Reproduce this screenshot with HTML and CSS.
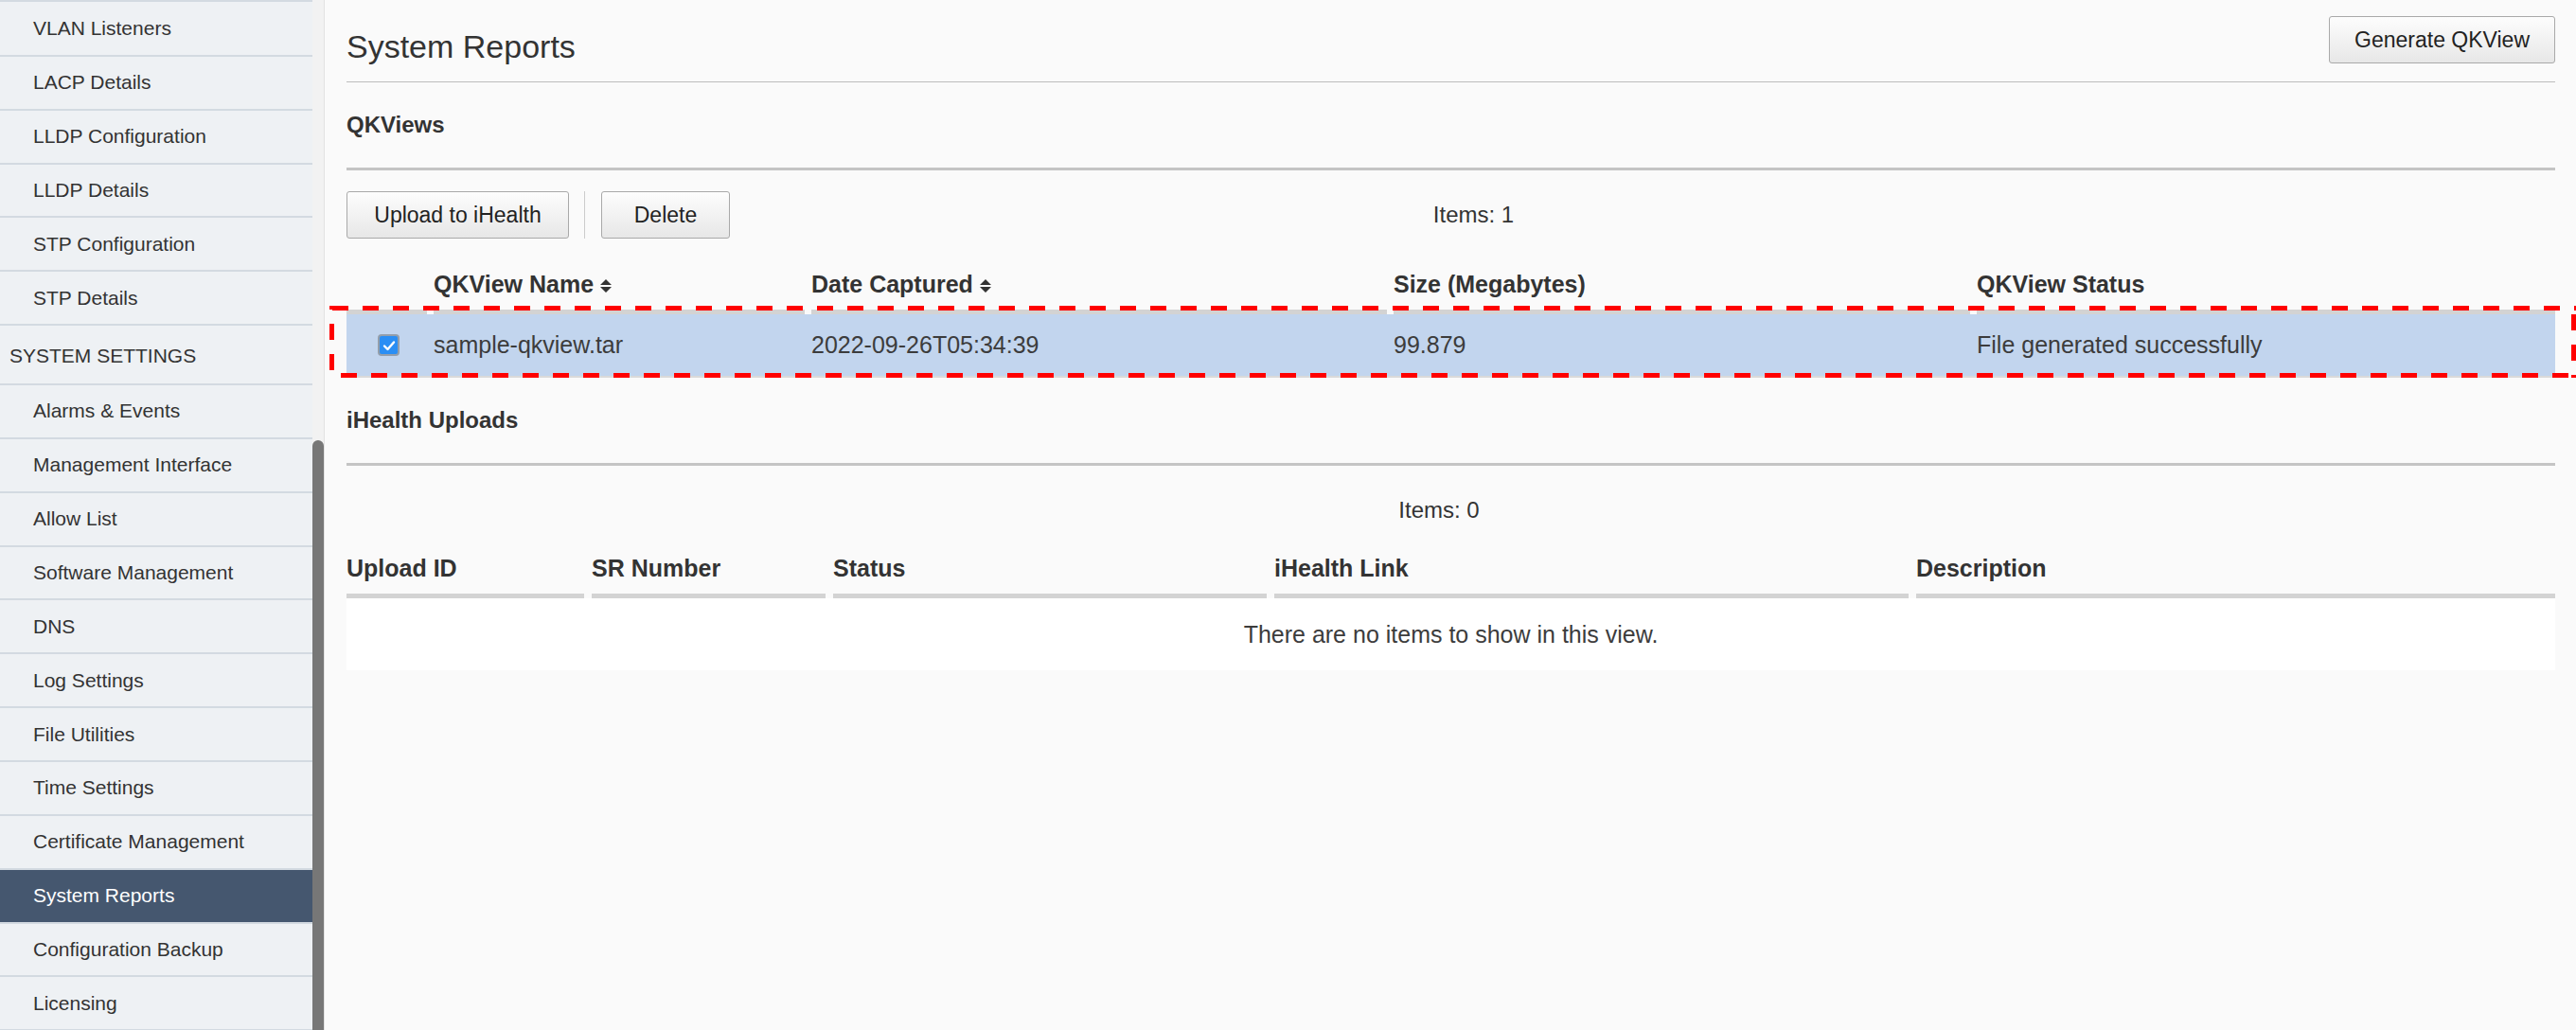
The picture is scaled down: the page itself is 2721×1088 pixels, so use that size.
FILE: index.html
```html
<!DOCTYPE html>
<html lang="en">
<head>
<meta charset="utf-8">
<title>System Reports</title>
<link rel="stylesheet" href="styles.css">
</head>
<body>
<div class="app">
  <aside class="sidebar">
    <nav class="nav">
      <a class="nav-item">VLAN Listeners</a>
      <a class="nav-item">LACP Details</a>
      <a class="nav-item">LLDP Configuration</a>
      <a class="nav-item">LLDP Details</a>
      <a class="nav-item">STP Configuration</a>
      <a class="nav-item">STP Details</a>
      <div class="nav-group">SYSTEM SETTINGS</div>
      <a class="nav-item">Alarms &amp; Events</a>
      <a class="nav-item">Management Interface</a>
      <a class="nav-item">Allow List</a>
      <a class="nav-item">Software Management</a>
      <a class="nav-item">DNS</a>
      <a class="nav-item">Log Settings</a>
      <a class="nav-item">File Utilities</a>
      <a class="nav-item">Time Settings</a>
      <a class="nav-item">Certificate Management</a>
      <a class="nav-item active">System Reports</a>
      <a class="nav-item">Configuration Backup</a>
      <a class="nav-item">Licensing</a>
    </nav>
    <div class="scroll-track"><div class="scroll-thumb"></div></div>
  </aside>

  <main class="main">
    <header class="page-header">
      <h1 class="page-title">System Reports</h1>
      <button class="btn btn-wide">Generate QKView</button>
    </header>

    <section class="section">
      <h2 class="section-title">QKViews</h2>
      <div class="toolbar">
        <button class="btn btn-wide">Upload to iHealth</button>
        <span class="tb-sep"></span>
        <button class="btn btn-delete">Delete</button>
        <span class="count count-qk">Items: 1</span>
      </div>
      <div class="grid-table qk-table">
        <div class="thead qk-cols">
          <div class="th"></div>
          <div class="th">QKView Name<svg class="sort" viewBox="0 0 12 14" width="12" height="14"><path d="M0 6 L6 0 L12 6 Z M0 8 L12 8 L6 14 Z"/></svg></div>
          <div class="th">Date Captured<svg class="sort" viewBox="0 0 12 14" width="12" height="14"><path d="M0 6 L6 0 L12 6 Z M0 8 L12 8 L6 14 Z"/></svg></div>
          <div class="th">Size (Megabytes)</div>
          <div class="th">QKView Status</div>
        </div>
        <div class="trow qk-cols selected">
          <div class="td td-check"><span class="checkbox"><svg viewBox="0 0 18 18" width="18" height="18"><path d="M4 9.5 L7.5 13 L14 5.5" fill="none" stroke="#fff" stroke-width="2.4" stroke-linecap="round" stroke-linejoin="round"/></svg></span></div>
          <div class="td">sample-qkview.tar</div>
          <div class="td">2022-09-26T05:34:39</div>
          <div class="td">99.879</div>
          <div class="td">File generated successfully</div>
        </div>
        <div class="callout"></div>
      </div>
    </section>

    <section class="section">
      <h2 class="section-title">iHealth Uploads</h2>
      <div class="toolbar toolbar-count">
        <span class="count count-ih">Items: 0</span>
      </div>
      <div class="grid-table ih-table">
        <div class="thead ih-cols">
          <div class="th">Upload ID</div>
          <div class="th">SR Number</div>
          <div class="th">Status</div>
          <div class="th">iHealth Link</div>
          <div class="th">Description</div>
        </div>
        <div class="empty">There are no items to show in this view.</div>
      </div>
    </section>
  </main>
</div>
</body>
</html>
```

FILE: styles.css
```css
* { box-sizing: border-box; }

html, body {
  margin: 0;
  padding: 0;
  height: 100%;
  overflow: hidden;
}

body {
  font-family: "Liberation Sans", Arial, Helvetica, sans-serif;
  color: #333;
  background: #fafafa;
}

.app {
  display: flex;
  height: 1088px;
}

/* ---------- Sidebar ---------- */
.sidebar {
  width: 343px;
  flex-shrink: 0;
  display: flex;
  overflow: hidden;
}

.nav {
  width: 330px;
  background: #eef1f4;
  border-top: 2px solid #d3dae1;
  padding-top: 1px;
  display: flex;
  flex-direction: column;
  overflow: hidden;
}

.nav-item,
.nav-group {
  flex-shrink: 0;
  display: flex;
  align-items: center;
  height: 56.85px;
  border-bottom: 2px solid #d3dae1;
  font-size: 21px;
  color: #333;
  padding-left: 35px;
  text-decoration: none;
}

.nav-group {
  height: 63px;
  padding-left: 10px;
  padding-top: 3px;
}

.nav-item.active {
  background: #45576f;
  color: #fff;
}

.scroll-track {
  width: 13px;
  background: #f2f2f2;
  border-right: 1px solid #e2e2e2;
  display: flex;
  flex-direction: column;
}

.scroll-thumb {
  margin-top: 465px;
  flex: 1;
  background: #777;
  border-radius: 6px 6px 0 0;
}

/* ---------- Main ---------- */
.main {
  flex: 1;
  min-width: 0;
  padding: 0 22px 0 23px;
  background: #fafafa;
}

.page-header {
  display: flex;
  justify-content: space-between;
  align-items: flex-start;
  padding: 17px 0 17px;
  border-bottom: 1px solid #bdbdbd;
}

.page-title {
  margin: 13px 0 0;
  font-size: 34px;
  line-height: 39px;
  font-weight: normal;
  color: #333;
}

.btn {
  height: 50px;
  padding: 0 26px;
  font-family: "Liberation Sans", Arial, Helvetica, sans-serif;
  font-size: 23px;
  color: #222;
  background: linear-gradient(#fdfdfd, #e7e7e7);
  border: 1px solid #a9a9a9;
  border-radius: 3px;
}

.btn-wide {
  min-width: 235px;
}

.btn-delete {
  min-width: 136px;
}

.section-title {
  margin: 0;
  padding: 32px 0 32px;
  font-size: 24px;
  line-height: 26px;
  font-weight: bold;
  color: #333;
  border-bottom: 3px solid #c4c4c4;
}

.toolbar {
  margin-top: 22px;
  height: 50px;
  display: flex;
  align-items: center;
}

.tb-sep {
  width: 1px;
  height: 50px;
  background: #cccccc;
  margin: 0 17px 0 16px;
}

.count {
  font-size: 24px;
  color: #333;
  text-align: center;
  flex: 1;
}

.count-qk {
  padding-right: 357px;
}

.count-ih {
  padding-right: 25px;
}

/* ---------- Tables ---------- */
.grid-table {
  position: relative;
}

.qk-table {
  margin-top: 34px;
}

.ih-table {
  margin-top: 22px;
}

.qk-cols {
  display: grid;
  grid-template-columns: 85px 392px 608px 609px 1fr;
  column-gap: 7px;
}

.ih-cols {
  display: grid;
  grid-template-columns: 251px 247px 458px 670px 1fr;
  column-gap: 8px;
}

.th {
  font-size: 25px;
  line-height: 29px;
  font-weight: bold;
  color: #333;
  padding-bottom: 12px;
  border-bottom: 5px solid #d3d3d3;
  white-space: nowrap;
}

.sort {
  margin-left: 7px;
  fill: #333;
  vertical-align: baseline;
}

.trow {
  height: 67px;
  align-items: center;
  border-bottom: 2px solid #dadada;
}

.trow.selected {
  background: #c2d5ee;
}

.td {
  font-size: 25px;
  color: #3c3c3c;
  white-space: nowrap;
}

.td-check {
  display: flex;
  padding-left: 33px;
}

.checkbox {
  width: 23px;
  height: 23px;
  border: 2px solid #939eab;
  border-radius: 4px;
  background: #2a8ef4;
  display: flex;
  align-items: center;
  justify-content: center;
}

.callout {
  position: absolute;
  top: 37px;
  left: -18px;
  right: -22px;
  height: 76px;
  pointer-events: none;
  background:
    repeating-linear-gradient(90deg, transparent 0 3px, #ff0000 3px 20px, transparent 20px 32px) left top / 100% 5px no-repeat,
    repeating-linear-gradient(90deg, transparent 0 12px, #ff0000 12px 29px, transparent 29px 32px) left bottom / 100% 5px no-repeat,
    repeating-linear-gradient(180deg, #ff0000 0 4px, transparent 4px 19px, #ff0000 19px 32px) left top / 5px 100% no-repeat,
    repeating-linear-gradient(180deg, transparent 0 9px, #ff0000 9px 26px, transparent 26px 32px) right top / 5px 100% no-repeat;
}

.empty {
  height: 76px;
  background: #ffffff;
  display: flex;
  align-items: center;
  justify-content: center;
  font-size: 25px;
  color: #3c3c3c;
}
```
